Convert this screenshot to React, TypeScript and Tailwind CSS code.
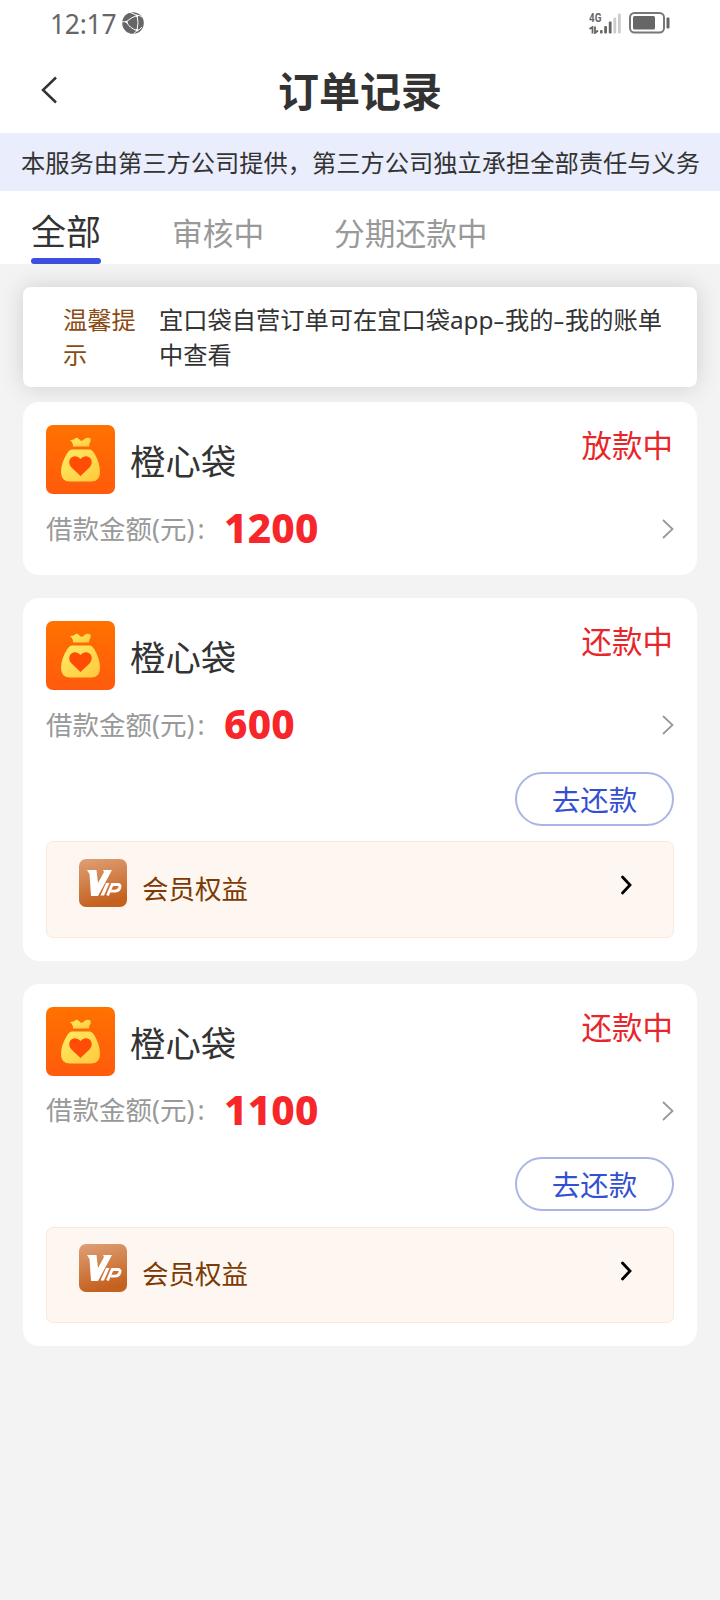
type Order = {
  id: number;
  status: string;
  amount: number;
  repayable: boolean;
};

const orders: Order[] = [
  { id: 1, status: "放款中", amount: 1200, repayable: false },
  { id: 2, status: "还款中", amount: 600, repayable: true },
  { id: 3, status: "还款中", amount: 1100, repayable: true },
];

function StatusBar() {
  return (
    <div className="flex h-[46px] items-center justify-between pl-[50px] pr-[50px] text-[#666]">
      <div className="flex items-center gap-[6px]">
        <span className="pt-[2px] text-[26.5px] leading-[46px] tracking-[-0.3px]">12:17</span>
        <svg className="h-[22px] w-[22px]" viewBox="0 0 22 22" fill="none">
          <circle cx="11" cy="11" r="10.8" fill="#666" />
          <path
            d="M0 10Q3 9.5 4.5 9.5Q10 5 15 3.5Q18 3 20 5M15 3.5Q11 1.5 7 0M15 3.5Q17 10 15 18.5M15 18.5Q7 16 4.5 9.5M15 18.5Q18 18 20 15M15 18.5Q13 20 12 22"
            stroke="#fff"
            strokeWidth="1"
          />
          <circle cx="4.5" cy="10" r="1.2" fill="#fff" />
          <circle cx="15" cy="3.7" r="1.2" fill="#fff" />
          <circle cx="15" cy="18.3" r="1.2" fill="#fff" />
        </svg>
      </div>
      <div className="flex items-center gap-[8px]">
        <div className="flex h-[21px] items-end">
          <div className="flex h-full w-[11px] flex-col justify-between">
            <span className="origin-left scale-x-[0.76] font-['Roboto',sans-serif] text-[13px] font-bold leading-[10px]">4G</span>
            <svg className="h-[8px] w-[10px]" viewBox="0 0 10 8" fill="none" stroke="#666" strokeWidth="1.8">
              <path d="M0.5 3L3.5 1V7.5M6 0.5V7L9 4.5" />
            </svg>
          </div>
          <svg className="h-[21px] w-[21px]" viewBox="0 0 21 21">
            <rect x="0" y="17" width="2.6" height="3.5" rx="1" fill="#666" />
            <rect x="4.2" y="13" width="2.8" height="7.5" rx="1" fill="#666" />
            <rect x="8.8" y="8.5" width="2.8" height="12" rx="1" fill="#666" />
            <rect x="13.4" y="4.5" width="2.8" height="16" rx="1" fill="#ccc" />
            <rect x="18" y="0.5" width="2.8" height="20" rx="1" fill="#ccc" />
          </svg>
        </div>
        <svg className="h-[22px] w-[41px]" viewBox="0 0 41 22">
          <rect x="1" y="1" width="34" height="19.5" rx="4.5" fill="none" stroke="#777" strokeWidth="2" />
          <rect x="4" y="4" width="22" height="13.5" rx="1.5" fill="#666" />
          <rect x="37.5" y="5.5" width="3" height="11" rx="1" fill="#666" />
        </svg>
      </div>
    </div>
  );
}

function BagLogo() {
  return (
    <svg className="h-[69px] w-[69px] shrink-0" viewBox="0 0 69 69">
      <defs>
        <linearGradient id="bagBg" x1="0" y1="0" x2="0" y2="1">
          <stop offset="0" stopColor="#ff7200" />
          <stop offset="1" stopColor="#ff5a0c" />
        </linearGradient>
        <linearGradient id="bagFill" x1="0" y1="0" x2="1" y2="1">
          <stop offset="0.2" stopColor="#ffe55c" />
          <stop offset="1" stopColor="#ffc83c" />
        </linearGradient>
      </defs>
      <rect width="69" height="69" rx="7" fill="url(#bagBg)" />
      <path
        d="M24 15Q27.5 15.5 30 12.8Q32 12.2 34.5 15.5Q36.5 16.5 39 13.5Q42 11.8 44.5 13.5Q45.5 16.5 43.5 18.5L43 21.5H27Q27.5 18 24 15Z"
        fill="url(#bagFill)"
      />
      <path
        d="M26 24.5H43.5Q46 24.5 48.5 28.5Q54 38 54 47Q54 56.5 45 56.5H24Q15 56.5 15 47Q15 38 21 28.5Q23.5 24.5 26 24.5Z"
        fill="url(#bagFill)"
      />
      <path
        d="M34.5 51L25.5 42.5C19 35 28 27 34.5 34C41 27 50 35 43.5 42.5Z"
        fill="#ff4d05"
      />
    </svg>
  );
}

function VipBadge() {
  return (
    <svg className="h-[48px] w-[48px] shrink-0" viewBox="0 0 48 48">
      <defs>
        <linearGradient id="vipBg" x1="0" y1="0" x2="0.25" y2="1">
          <stop offset="0" stopColor="#dfa077" />
          <stop offset="1" stopColor="#c4611f" />
        </linearGradient>
      </defs>
      <rect width="48" height="48" rx="7" fill="url(#vipBg)" />
      <path d="M8 11H17.5L19 24L25 13L24 11H33L19 37H12L10.5 15Z" fill="#fff" />
      <path d="M27 24H30.5L25 36.5H21.5Z" fill="#fff" />
      <path
        d="M28.5 36.5L33.2 25.5H38.5Q42 25.5 40.8 28.8Q39.6 32.2 36 32.2H31.5"
        fill="none"
        stroke="#fff"
        strokeWidth="2.8"
      />
    </svg>
  );
}

function OrderCard({ order }: { order: Order }) {
  return (
    <div
      className={`rounded-[16px] bg-white px-[23px] pt-[23px] ${
        order.repayable ? "h-[362.5px]" : "h-[173px]"
      }`}
    >
      <div className="flex justify-between">
        <div className="flex items-center">
          <BagLogo />
          <span className="ml-[15px] pt-[3px] text-[35.4px] leading-[50px] text-[#333]">橙心袋</span>
        </div>
        <span className="pr-[1px] text-[30.5px] leading-[40px] text-[#e8262a]">{order.status}</span>
      </div>

      <div className="mt-[12px] flex h-[46px] items-center">
        <span className="flex w-[178px] whitespace-nowrap pt-[1px] text-[26.5px] text-[#999]">
          <span>借款金额(元)</span>
          <span className="ml-[3px]">:</span>
        </span>
        <span className="pb-[3px] text-[40.5px] font-extrabold leading-[43px] tracking-[0.25px] text-[#f7262b]">
          {order.amount}
        </span>
        <svg className="ml-auto h-[20px] w-[12px]" viewBox="0 0 12 20" fill="none">
          <path d="M1 1L10.5 10L1 19" stroke="#999" strokeWidth="1.8" />
        </svg>
      </div>

      {order.repayable && (
        <>
          <div className="mt-[23.6px] flex justify-end">
            <button className="h-[54px] w-[159px] rounded-full border-2 border-[#aab5e6] pt-[3px] text-[28.5px] leading-[47px] text-[#3350d2]">
              去还款
            </button>
          </div>
          <div className="mt-[15.4px] flex h-[96.4px] items-start rounded-[7px] border border-[#fae8da] bg-[#fef7f1] pl-[32px] pr-[40px] pt-[16.5px]">
            <VipBadge />
            <span className="ml-[15px] mt-[10px] text-[26.5px] leading-[40px] text-[#7c3a05]">会员权益</span>
            <svg className="ml-auto mt-[16.5px] h-[20px] w-[13px]" viewBox="0 0 13 20" fill="none">
              <path d="M2.5 2L10 10L2.5 18" stroke="#000" strokeWidth="2.8" strokeLinecap="round" />
            </svg>
          </div>
        </>
      )}
    </div>
  );
}

export default function App() {
  return (
    <div className="min-h-[1600px] w-[720px] bg-[#f3f3f3] font-['Noto_Sans','Noto_Sans_CJK_SC',sans-serif]">
      <div className="h-[264px] bg-white">
        <StatusBar />

        {/* Title bar */}
        <div className="grid h-[87px] grid-cols-[1fr_auto_1fr] items-center">
          <svg className="ml-[41px] h-[28px] w-[17px]" viewBox="0 0 17 28" fill="none">
            <path d="M15 1.5L2 14L15 26.5" stroke="#333" strokeWidth="2.5" />
          </svg>
          <h1 className="pt-[3px] text-[41px] font-bold leading-[60px] text-[#333]">订单记录</h1>
        </div>

        <div className="h-[58px] whitespace-nowrap bg-[#eaedfb] pl-[21px] pt-[1px] text-[24.25px] leading-[57px] text-[#333]">
          本服务由第三方公司提供，第三方公司独立承担全部责任与义务
        </div>

        {/* Tabs */}
        <div className="flex h-[73px] pl-[31px] text-[30.7px] text-[#999]">
          <div className="flex w-[70px] flex-col justify-between">
            <span className="pt-[17px] text-[35px] leading-[48px] text-[#333]">全部</span>
            <span className="h-[6px] rounded-full bg-[#3b50df]" />
          </div>
          <span className="ml-[71px] pt-[18px] leading-[48px]">审核中</span>
          <span className="ml-[70px] pt-[18px] leading-[48px]">分期还款中</span>
        </div>
      </div>

      {/* Notice */}
      <div className="px-[23px] pt-[23px]">
        <div className="flex h-[100px] rounded-[8px] bg-white pl-[40px] pt-[15px] text-[24.25px] leading-[35px] shadow-[0_0_23px_rgba(0,0,0,0.15)]">
          <span className="w-[73px] text-[#8a4b14]">温馨提示</span>
          <div className="ml-[23px] whitespace-nowrap text-[#333]">
            <div className="flex">
              <span>宜口袋自营订单可在宜口袋app</span>
              <span className="w-[11.5px] scale-x-[1.5] text-center">-</span>
              <span>我的</span>
              <span className="w-[11.5px] scale-x-[1.5] text-center">-</span>
              <span>我的账单</span>
            </div>
            <div>中查看</div>
          </div>
        </div>
      </div>

      <div className="relative mt-[15.2px] flex flex-col gap-[23px] px-[23px]">
        {orders.map((order) => (
          <OrderCard key={order.id} order={order} />
        ))}
      </div>
    </div>
  );
}
